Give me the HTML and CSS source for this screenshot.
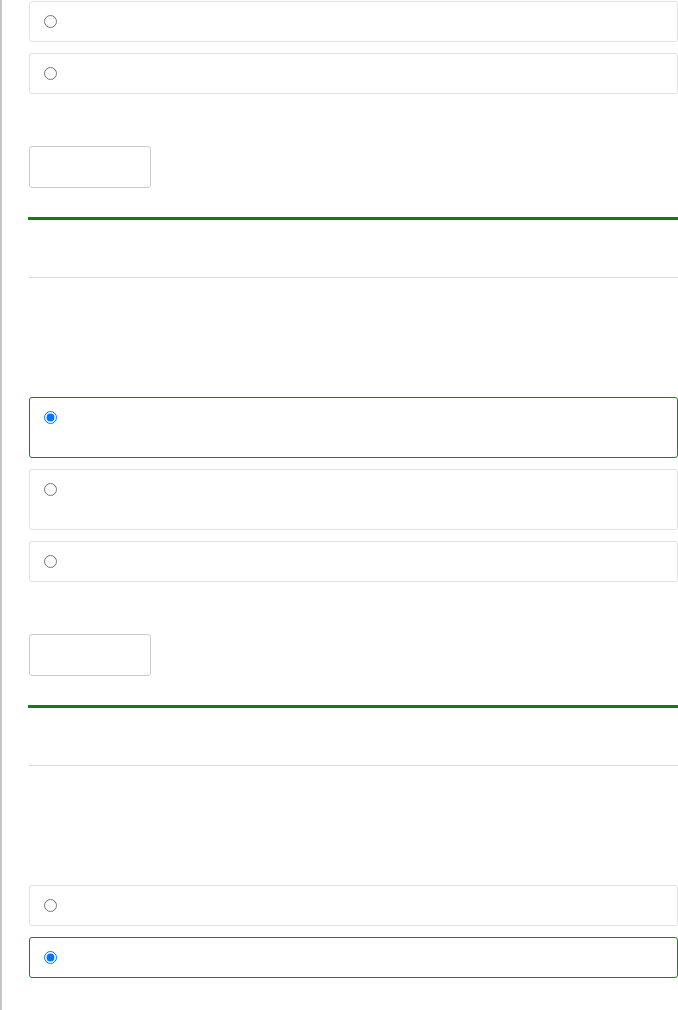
FILE: index.html
```html
<!DOCTYPE html>
<html lang="en">
<head>
<meta charset="utf-8">
<title>Quiz</title>
<link rel="stylesheet" href="styles.css">
</head>
<body>
<div class="page">
  <div class="question first">
    <div class="options">
      <div class="option"><input type="radio" name="q1" aria-label="Option 1"><span class="option-body"></span></div>
      <div class="option"><input type="radio" name="q1" aria-label="Option 2"><span class="option-body"></span></div>
    </div>
    <input class="answer-input" type="text" aria-label="Answer">
  </div>

  <div class="question">
    <div class="rule-strong"></div>
    <div class="rule-light"></div>
    <div class="options">
      <div class="option is-chosen tall"><input type="radio" name="q2" checked aria-label="Option 1"><span class="option-body"></span></div>
      <div class="option tall"><input type="radio" name="q2" aria-label="Option 2"><span class="option-body"></span></div>
      <div class="option"><input type="radio" name="q2" aria-label="Option 3"><span class="option-body"></span></div>
    </div>
    <input class="answer-input" type="text" aria-label="Answer">
  </div>

  <div class="question">
    <div class="rule-strong"></div>
    <div class="rule-light"></div>
    <div class="options">
      <div class="option"><input type="radio" name="q3" aria-label="Option 1"><span class="option-body"></span></div>
      <div class="option is-chosen"><input type="radio" name="q3" checked aria-label="Option 2"><span class="option-body"></span></div>
    </div>
  </div>
</div>
</body>
</html>
```

FILE: styles.css
```css
html, body {
  margin: 0;
  padding: 0;
  background: #ffffff;
  font-family: "Liberation Sans", Arial, sans-serif;
}

.page {
  width: 678px;
  min-height: 1010px;
  box-sizing: border-box;
  border-left: 2px solid #c6c6c6;
  padding: 1px 0 0 26px;
}

.question {
  display: flex;
  flex-direction: column;
}

.question + .question {
  margin-top: 29px;
}

.rule-strong {
  height: 3px;
  background: #127c12;
}

.rule-light {
  height: 1px;
  background: #dcdcdc;
  margin-top: 57px;
  margin-left: 1px;
}

.options {
  display: flex;
  flex-direction: column;
  gap: 11px;
  margin-left: 1px;
}

.rule-light + .options {
  margin-top: 119px;
}

.option {
  display: flex;
  align-items: flex-start;
  padding: 13px 14px;
  border: 1px solid #e3e3e3;
  border-radius: 3px;
  background: #fff;
}

.option.is-chosen {
  border-color: #0e8a0e;
}

.option input {
  margin: 0;
  width: 13px;
  height: 13px;
  flex: none;
}

.option-body {
  flex: 1;
  display: block;
  height: 13px;
}

.option.tall .option-body {
  height: 33px;
}

.answer-input {
  display: block;
  width: 122px;
  height: 42px;
  box-sizing: border-box;
  margin: 52px 0 0 1px;
  border: 1px solid #cccccc;
  border-radius: 3px;
  background: #fff;
  padding: 0 8px;
}
```
